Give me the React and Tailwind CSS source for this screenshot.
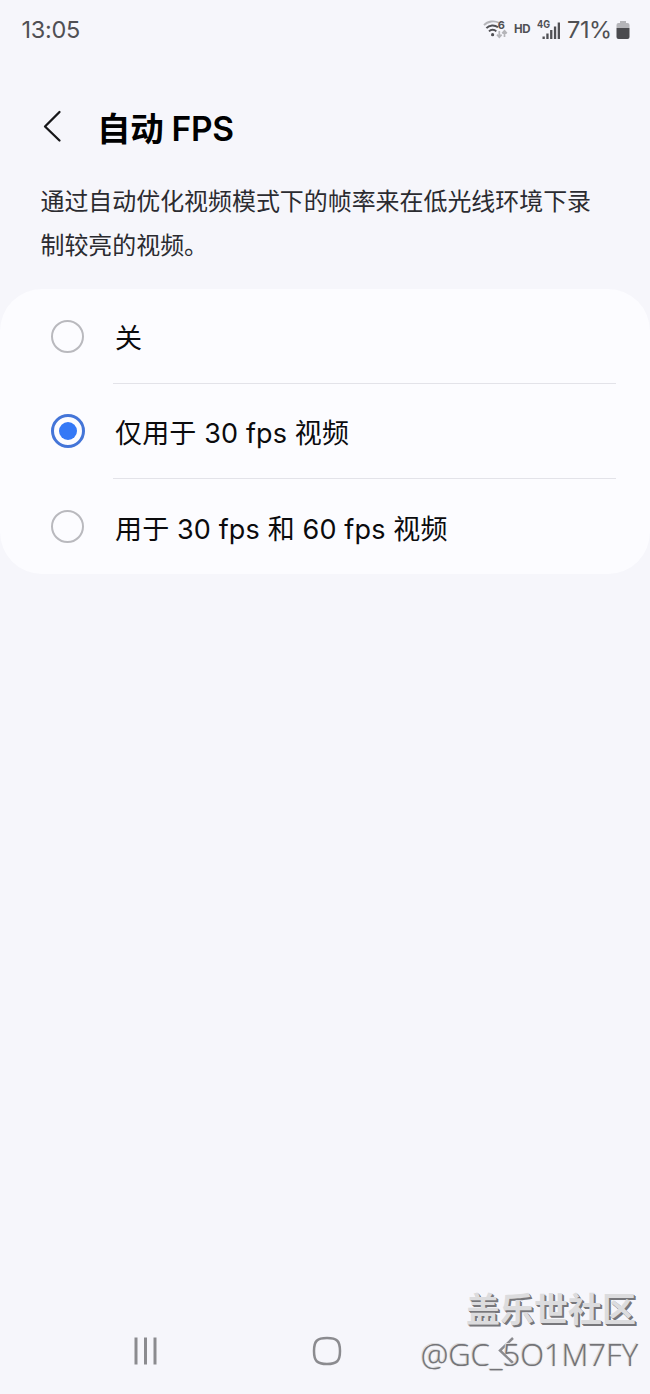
import React, { useState } from 'react';

const options = [
  { id: 'off', label: '关' },
  { id: '30', label: '仅用于 30 fps 视频' },
  { id: 'both', label: '用于 30 fps 和 60 fps 视频' },
];

function WifiIcon() {
  return (
    <svg width="26" height="28" viewBox="0 -4 26 28" fill="none">
      <path d="M1 5.2C4.600 .9 11.500 .4 16 2.800" stroke="#b5b5b9" strokeWidth="1.800" />
      <path d="M3.400 8.200C6.300 4.900 11.500 4.500 15 7.300" stroke="#505054" strokeWidth="1.900" />
      <path d="M6 11.300C8 9.200 11.300 9.200 13.300 11.300" stroke="#505054" strokeWidth="1.900" />
      <circle cx="9.600" cy="14.700" r="1.600" fill="#505054" />
      <text x="14.800" y="8.500" fontSize="11" fontWeight="700" fill="#505054">6</text>
      <path d="M16.300 11v6M14 14.700l2.300 2.500 2.300-2.500M21.500 17v-6M19.200 13.300l2.300-2.500 2.300 2.500" stroke="#b5b5b9" strokeWidth="1.700" />
    </svg>
  );
}

function SignalIcon() {
  return (
    <svg width="24" height="30" viewBox="0 -4 24 30" fill="#505054">
      <text x="0" y="8.500" fontSize="10.500" fontWeight="700" textLength="13" lengthAdjust="spacingAndGlyphs">4G</text>
      <rect x="5.500" y="17.500" width="2.300" height="2.500" />
      <rect x="9.300" y="14.500" width="2.300" height="5.500" />
      <rect x="13.100" y="11" width="2.300" height="9" />
      <rect x="16.900" y="7.500" width="2.300" height="12.500" />
      <rect x="20.700" y="3.500" width="2.300" height="16.500" />
    </svg>
  );
}

function BatteryIcon() {
  return (
    <svg width="14" height="20" viewBox="0 0 14 20">
      <path d="M4 1h6v2h1.500a2 2 0 0 1 2 2v3H.5V5a2 2 0 0 1 2-2H4z" fill="#b5b5b9" />
      <path d="M.5 8h13v9a2 2 0 0 1-2 2h-9a2 2 0 0 1-2-2z" fill="#4b4b4f" />
    </svg>
  );
}

function StatusBar() {
  return (
    <div className="flex h-[60px] items-center justify-between pr-[20px] pl-[21.5px] text-[#505054]">
      <span className="text-[23.5px] tracking-[-0.3px]">13:05</span>
      <div className="flex items-center">
        <WifiIcon />
        <span className="ml-[5px] w-[17px] text-[11.5px] font-bold tracking-[-0.3px]">HD</span>
        <div className="ml-[6px]"><SignalIcon /></div>
        <span className="ml-[6px] w-[49px] text-[23.5px] tracking-[-0.4px]">71%</span>
        <BatteryIcon />
      </div>
    </div>
  );
}

function Radio({ checked }) {
  if (checked) {
    return (
      <span className="mt-[-1px] flex h-[34px] w-[34px] shrink-0 items-center justify-center rounded-full border-[3px] border-[#4475d8]">
        <span className="h-[18px] w-[18px] rounded-full bg-[#3478f6]"></span>
      </span>
    );
  }
  return <span className="mt-[-1px] mr-px h-[33px] w-[33px] shrink-0 rounded-full border-2 border-[#b9b9be]"></span>;
}

function NavBar() {
  return (
    <div className="flex h-[86px] items-center text-[#8b8b8f]">
      <svg className="ml-[131px]" width="28" height="30" viewBox="0 0 28 30" fill="none" stroke="currentColor" strokeWidth="3">
        <path d="M5 1.500v27M14.500 1.500v27M24 1.500v27" />
      </svg>
      <svg className="ml-[153px]" width="30" height="30" viewBox="0 0 30 30" fill="none" stroke="currentColor" strokeWidth="2.500">
        <path d="M15 2C25 2 28 5 28 15S25 28 15 28 2 25 2 15 5 2 15 2Z" />
      </svg>
      <svg className="ml-[155px]" width="20" height="30" viewBox="0 0 20 30" fill="none" stroke="currentColor" strokeWidth="2.500">
        <path d="M16 2L3 14.500 16 27" />
      </svg>
    </div>
  );
}

export default function App() {
  const [selected, setSelected] = useState('30');

  return (
    <div
      lang="zh-CN"
      className="relative flex h-[1394px] w-[650px] flex-col overflow-hidden bg-[#f6f6fb] font-['Inter','Noto_Sans_CJK_SC',sans-serif]"
    >
      <StatusBar />

      <header className="flex h-[104px] items-center pt-[32px] pl-[42px]">
        <svg className="mt-[-4px]" width="20" height="34" viewBox="0 0 20 34" fill="none" stroke="#171719" strokeWidth="2.300" strokeLinecap="round" strokeLinejoin="round">
          <path d="M17.500 3L3 17.500 17.500 31.500" />
        </svg>
        <h1 className="mt-[3px] ml-[35px] text-[33.5px] font-semibold tracking-[-0.3px] text-black">自动 FPS</h1>
      </header>

      <p className="mt-[16px] ml-[40.5px] w-[560px] text-[23.95px] leading-[44px] text-[#2b2b30]">
        通过自动优化视频模式下的帧率来在低光线环境下录制较亮的视频。
      </p>

      <section className="mt-[21px] rounded-[42px] bg-[#fcfcff]">
        {options.map((option, i) => (
          <button
            key={option.id}
            type="button"
            onClick={() => setSelected(option.id)}
            className="flex h-[95px] w-full items-center pr-[34px] pl-[50.5px] text-left"
          >
            <Radio checked={selected === option.id} />
            <span className={`ml-[28.5px] flex h-full flex-1 items-center pt-[7px] pl-[2px] text-[27px] tracking-[0.14px] text-[#0b0b0d] ${i < options.length - 1 ? 'border-b-[1.5px] border-[#e3e3e9]' : ''}`}>
              {option.label}
            </span>
          </button>
        ))}
      </section>

      <div className="flex-1"></div>
      <NavBar />

      <div className="absolute right-[12px] bottom-[19px] flex flex-col items-end whitespace-nowrap">
        <span className="mr-[2px] text-[34px] leading-[46px] font-bold text-[#dcdcde] [text-shadow:1px_1px_0_#77777b,2px_2px_0_#77777b]">盖乐世社区</span>
        <span className="font-['Open_Sans',sans-serif] text-[31px] leading-[42px] font-light text-[#737377] [text-shadow:-1px_-1px_0_#dcdcde,0_0_1px_#8b8b8f]">@GC_5O1M7FY</span>
      </div>
    </div>
  );
}
